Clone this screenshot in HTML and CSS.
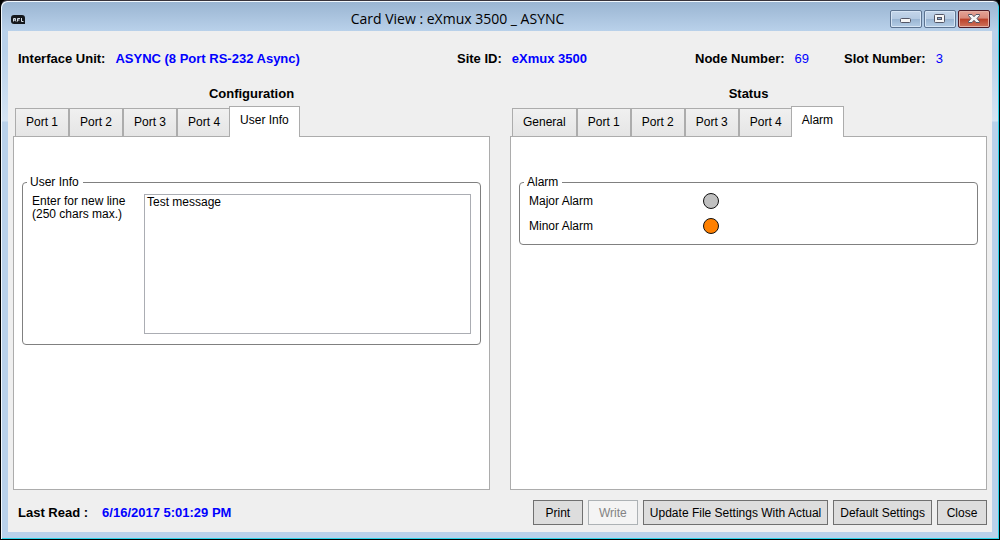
FILE: index.html
```html
<!DOCTYPE html>
<html lang="en">
<head>
<meta charset="utf-8">
<title>Card View : eXmux 3500 _ ASYNC</title>
<link rel="stylesheet" href="styles.css">
</head>
<body>
<div class="window">
  <header class="titlebar">
    <svg class="logo" width="14" height="9" viewBox="0 0 14 9" aria-label="RFL logo" role="img">
      <path d="M3 0h8q3 0 3 3v6H3Q0 9 0 6V3Q0 0 3 0z" fill="#15181c"/>
      <path d="M2.500 6.500v-3h2v1.500H2.500M4 5l1 1.500M6.500 6.500v-3h2.500M6.500 5h2M10.500 3v3.500h2" fill="none" stroke="#d5dde5"/>
    </svg>
    <h1 class="title">Card View : eXmux 3500 _ ASYNC</h1>
    <div class="controls">
      <button class="control" type="button" aria-label="Minimize">
        <svg width="30" height="16" viewBox="0 0 30 16"><rect x="9.500" y="7.500" width="10" height="4" rx="1" fill="#f6f6f6" stroke="#535666"/></svg>
      </button>
      <button class="control" type="button" aria-label="Maximize">
        <svg width="30" height="16" viewBox="0 0 30 16"><rect x="9.500" y="3.500" width="10" height="8" rx="1" fill="#f6f6f6" stroke="#535666"/><rect x="12.500" y="6.500" width="4" height="2" fill="#8fafd2" stroke="#535666"/></svg>
      </button>
      <button class="control control-close" type="button" aria-label="Close window">
        <svg width="30" height="16" viewBox="0 0 30 16"><path d="M9.500 3.500h3.500l2 2.200 2-2.200h3.500v1l-2.500 3 2.500 3v1h-3.500l-2-2.200-2 2.200H9.500v-1l2.500-3-2.500-3z" fill="#f6f6f6" stroke="#535666"/></svg>
      </button>
    </div>
  </header>
  <main class="content">
    <dl class="summary">
      <div class="field"><dt>Interface Unit:</dt><dd>ASYNC (8 Port RS-232 Async)</dd></div>
      <div class="field"><dt>Site ID:</dt><dd>eXmux 3500</dd></div>
      <div class="field"><dt>Node Number:</dt><dd class="number">69</dd></div>
      <div class="field"><dt>Slot Number:</dt><dd class="number">3</dd></div>
    </dl>
    <div class="columns">
      <section class="column">
        <h2 class="heading">Configuration</h2>
        <div class="tabs" role="tablist">
          <button class="tab" type="button" role="tab">Port 1</button>
          <button class="tab" type="button" role="tab">Port 2</button>
          <button class="tab" type="button" role="tab">Port 3</button>
          <button class="tab" type="button" role="tab">Port 4</button>
          <button class="tab tab-active" type="button" role="tab" aria-selected="true">User Info</button>
        </div>
        <div class="panel" role="tabpanel">
          <fieldset class="group group-info">
            <legend>User Info</legend>
            <label class="message-label" for="message">Enter for new line<br>(250 chars max.)</label>
            <textarea class="message" id="message" maxlength="250">Test message</textarea>
          </fieldset>
        </div>
      </section>
      <section class="column">
        <h2 class="heading">Status</h2>
        <div class="tabs" role="tablist">
          <button class="tab" type="button" role="tab">General</button>
          <button class="tab" type="button" role="tab">Port 1</button>
          <button class="tab" type="button" role="tab">Port 2</button>
          <button class="tab" type="button" role="tab">Port 3</button>
          <button class="tab" type="button" role="tab">Port 4</button>
          <button class="tab tab-active" type="button" role="tab" aria-selected="true">Alarm</button>
        </div>
        <div class="panel" role="tabpanel">
          <fieldset class="group group-alarm">
            <legend>Alarm</legend>
            <div class="alarm"><span>Major Alarm</span><span class="lamp"></span></div>
            <div class="alarm"><span>Minor Alarm</span><span class="lamp lamp-on"></span></div>
          </fieldset>
        </div>
      </section>
    </div>
    <footer class="footer">
      <dl class="last-read field"><dt>Last Read :</dt><dd>6/16/2017 5:01:29 PM</dd></dl>
      <div class="actions">
        <button class="action" type="button">Print</button>
        <button class="action" type="button" disabled>Write</button>
        <button class="action" type="button">Update File Settings With Actual</button>
        <button class="action" type="button">Default Settings</button>
        <button class="action" type="button">Close</button>
      </div>
    </footer>
  </main>
</div>
</body>
</html>
```
FILE: styles.css
```css
* {
  box-sizing: border-box;
}

body {
  margin: 0;
  background: #000;
  font: 12px/14px "Liberation Sans", Arial, sans-serif;
  color: #000;
}

button,
textarea {
  font: inherit;
  color: inherit;
}

h1,
h2,
dl,
dd {
  margin: 0;
}

.window {
  display: flex;
  flex-direction: column;
  min-height: 100vh;
  padding: 0 6px 7px;
  border: 1px solid #000;
  border-top-color: #38333b;
  border-radius: 7px 7px 0 0;
  background: linear-gradient(#99b4d1 0, #b9d1ea 30px, #b9d1ea 50px, #d5e4f3 120px, #b9d1ea 121px);
  box-shadow: inset 1px 1px #f2f8fd, inset -1px -1px #2bd3e8;
}

.titlebar {
  display: grid;
  grid-template-columns: auto 1fr auto;
  align-items: center;
  height: 30px;
  padding: 0 3px 0 4px;
}

.logo {
  margin-top: 7px;
}

.title {
  padding-top: 6px;
  font: 14px/20px "Open Sans", "Noto Sans", sans-serif;
  text-align: center;
}

.controls {
  display: flex;
  justify-content: flex-end;
  gap: 2px;
  padding-top: 6px;
}

.control {
  width: 32px;
  height: 18px;
  padding: 0;
  border: 1px solid #5c7390;
  border-radius: 2px;
  background: linear-gradient(#c4d6ea 0, #b4cae2 50%, #98b4d2 50%, #b4cde6);
  box-shadow: inset 0 0 0 1px #d6e5f5;
}

.control svg {
  display: block;
}

.control-close {
  border-color: #4e1a26;
  background: linear-gradient(#e5a397 0, #d9897a 45%, #bb4029 50%, #cf735c);
  box-shadow: inset 0 0 0 1px #e5b0a4;
}

.content {
  display: flex;
  flex: 1;
  flex-direction: column;
  margin: 0 1px;
  padding: 0 5px;
  background: #efefef;
}

.summary {
  display: grid;
  grid-template-columns: 439fr 238fr 149fr 143fr;
  padding: 20px 0 0 5px;
}

.field {
  display: flex;
  gap: 10px;
  font: bold 13px/16px "Liberation Sans", Arial, sans-serif;
}

.field dd {
  color: #00f;
}

.field .number {
  font-weight: normal;
}

.columns {
  display: grid;
  flex: 1;
  grid-template-columns: 1fr 1fr;
  gap: 20px;
  padding-top: 19px;
}

.column {
  display: flex;
  flex-direction: column;
}

.heading {
  font: bold 13px/16px "Liberation Sans", Arial, sans-serif;
  text-align: center;
}

.tabs {
  display: flex;
  align-items: flex-end;
  height: 34px;
  padding-left: 2px;
}

.tab {
  height: 28px;
  padding: 0 10px 2px;
  border: 1px solid #acacac;
  border-bottom: 0;
  background: linear-gradient(#f0f0f0, #e5e5e5);
}

.tab-active {
  z-index: 1;
  height: 31px;
  margin: 0 0 -1px -2px;
  padding-bottom: 4px;
  background: #fff;
}

.panel {
  flex: 1;
  padding: 38px 8px 8px;
  border: 1px solid #acacac;
  background: #fff;
}

.group {
  min-width: 0;
  margin: 0;
  border: 1px solid #808080;
  border-radius: 4px;
}

.group legend {
  padding: 0 4px 0 3px;
}

.group-info {
  display: grid;
  grid-template-columns: 112px 1fr;
  padding: 5px 9px 10px;
}

.group-info legend,
.group-alarm legend {
  margin-left: -5px;
}

.message-label {
  padding-top: 1px;
  line-height: 13px;
}

.message {
  height: 140px;
  padding: 0 2px;
  border: 1px solid #abadb3;
  background: #fff;
  resize: none;
}

.group-alarm {
  display: grid;
  gap: 9px;
  padding: 4px 9px 10px;
}

.alarm {
  display: grid;
  grid-template-columns: 174px 1fr;
  align-items: center;
}

.lamp {
  width: 16px;
  height: 16px;
  border: 1px solid #111;
  border-radius: 50%;
  background: #c0c0c0;
}

.lamp-on {
  background: #ff8000;
}

.footer {
  display: flex;
  align-items: center;
  justify-content: space-between;
  padding: 10px 0 7px;
}

.last-read {
  gap: 14px;
  padding-left: 5px;
}

.actions {
  display: flex;
  gap: 5px;
}

.action {
  min-width: 50px;
  height: 25px;
  padding: 0 6px;
  border: 1px solid #707070;
  background: #ddd;
}

.action:disabled {
  border-color: #adb2b5;
  background: #f4f4f4;
  color: #838383;
}
```
